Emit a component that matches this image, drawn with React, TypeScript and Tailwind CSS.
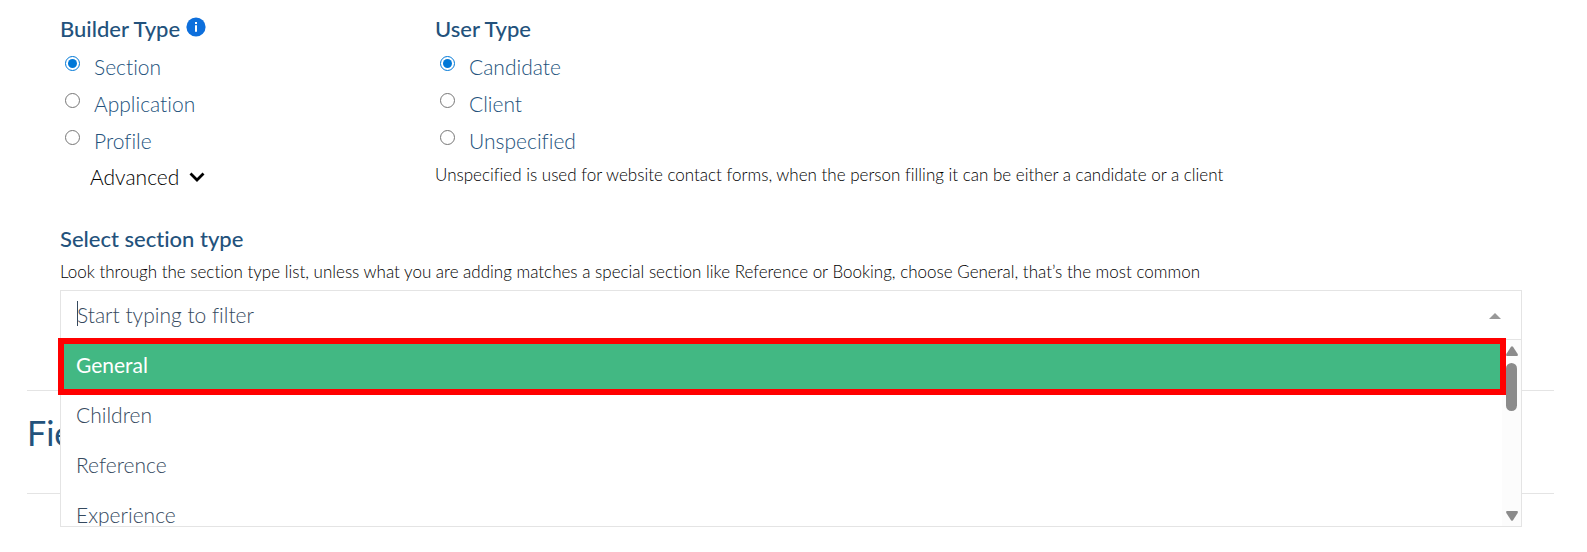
import { useState } from "react";

type RadioGroupProps = {
  name: string;
  options: string[];
  value: string;
  onChange: (value: string) => void;
};

const sectionTypes = ["General", "Children", "Reference", "Experience"];

function RadioGroup({ name, options, value, onChange }: RadioGroupProps) {
  return (
    <div className="mt-[5px]">
      {options.map((option) => (
        <label key={option} className="flex h-[37px] items-start text-[21px] leading-[38px] text-[#23527c]">
          <input
            type="radio"
            name={name}
            checked={value === option}
            onChange={() => onChange(option)}
            className="mt-2 mr-3.5 ml-[5px] size-[15px] shrink-0 accent-[#0078d7]"
          />
          {option}
        </label>
      ))}
    </div>
  );
}

function InfoIcon() {
  return (
    <svg viewBox="0 0 20 20" className="-mt-1 size-5" aria-hidden="true">
      <circle cx="10" cy="10" r="9.6" fill="#0d6fdc" />
      <path d="M9 5h2v1.900H9zM9 8.300h2v6.500H9z" fill="#fff" />
    </svg>
  );
}

function Scrollbar() {
  return (
    <div className="flex w-[19px] shrink-0 flex-col items-center bg-[#fcfcfc] pt-1.5 pb-[5px]" aria-hidden="true">
      <svg viewBox="0 0 12 10" className="h-2.5 w-3">
        <path d="M5 .8Q6-.4 7 .8L11.700 8Q12.300 9.800 11 10H1Q-.3 9.800.3 8Z" fill="#8b8b8b" />
      </svg>
      <div className="mt-[7px] h-12 w-[11px] rounded-full bg-[#8b8b8b]" />
      <svg viewBox="0 0 12 10" className="mt-auto h-2.5 w-3">
        <path d="M5 9.200Q6 10.400 7 9.200L11.700 2Q12.300.2 11 0H1Q-.3.2.3 2Z" fill="#8b8b8b" />
      </svg>
    </div>
  );
}

function SectionTypeSelect() {
  const [query, setQuery] = useState("");
  return (
    <div className="relative mt-1.5">
      <div className="relative flex h-[50px] items-center border border-[#e4e4e4] bg-white pr-5 pl-4">
        {query === "" && <span className="absolute top-2.5 left-4 h-[25px] w-px bg-[#35495e]" />}
        <input
          id="section-type"
          type="text"
          role="combobox"
          aria-expanded="true"
          aria-controls="section-type-list"
          placeholder="Start typing to filter"
          value={query}
          onChange={(event) => setQuery(event.target.value)}
          className="min-w-0 flex-1 text-[21px] text-[#35495e] outline-none placeholder:text-[#35495e] placeholder:opacity-100"
        />
        <svg viewBox="0 0 12 6" className="mt-0.5 h-1.5 w-3" aria-hidden="true">
          <path d="M6 0l6 6H0z" fill="#999" />
        </svg>
      </div>
      <div className="absolute inset-x-0 top-full z-10 flex h-[187px] border border-t-0 border-[#e4e4e4] bg-white">
        <ul id="section-type-list" role="listbox" className="min-w-0 flex-1 overflow-hidden">
          {sectionTypes.map((type, index) => (
            <li
              key={type}
              role="option"
              aria-selected={index === 0}
              className={
                index === 0
                  ? "h-[50px] bg-[#42b883] pl-[15px] text-[21px] leading-[50px] font-normal text-white"
                  : "h-[50px] pl-[15px] text-[21px] leading-[50px] text-[#35495e]"
              }
            >
              {type}
            </li>
          ))}
        </ul>
        <Scrollbar />
        <div className="pointer-events-none absolute -top-0.5 right-[15px] -left-[3px] h-[57px] border-6 border-[#ff0000]" />
      </div>
    </div>
  );
}

export default function App() {
  const [builder, setBuilder] = useState("Section");
  const [user, setUser] = useState("Candidate");
  return (
    <main className="min-h-screen bg-white pr-[33px] pl-[27px] font-['Lato',sans-serif] font-light text-black [font-variant-ligatures:none]">
      <div className="pt-[15px] pr-8 pl-[33px]">
        <div className="flex items-start">
          <fieldset className="w-[375px] shrink-0">
            <legend className="flex h-7 items-center gap-1.5 text-[22px] leading-7 font-medium text-[#23527c]">
              Builder Type <InfoIcon />
            </legend>
            <RadioGroup
              name="builder"
              options={["Section", "Application", "Profile"]}
              value={builder}
              onChange={setBuilder}
            />
            <button type="button" className="mt-1 ml-[30px] flex items-center gap-2.5 text-[21px] leading-7">
              Advanced
              <svg viewBox="0 0 16 10" className="h-2.5 w-4" aria-hidden="true">
                <path d="M1.500 1.500L8 8l6.500-6.500" fill="none" stroke="#000" strokeWidth="2.800" />
              </svg>
            </button>
          </fieldset>
          <fieldset className="min-w-0">
            <legend className="h-7 text-[22px] leading-7 font-medium text-[#23527c]">User Type</legend>
            <RadioGroup
              name="user"
              options={["Candidate", "Client", "Unspecified"]}
              value={user}
              onChange={setUser}
            />
            <p className="mt-1 text-[17px] leading-6">
              Unspecified is used for website contact forms, when the person filling it can be either a candidate or a
              client
            </p>
          </fieldset>
        </div>
        <div className="mt-[34px]">
          <label htmlFor="section-type" className="block text-[22px] leading-7 font-medium text-[#23527c]">
            Select section type
          </label>
          <p className="mt-[7px] text-[17px] leading-6">
            Look through the section type list, unless what you are adding matches a special section like Reference or
            Booking, choose General, that’s the most common
          </p>
          <SectionTypeSelect />
        </div>
      </div>
      <section className="mt-[50px] h-[104px] border-y border-[#e4e4e4] pt-[22px]">
        <h2 className="text-[34px] leading-10 font-normal text-[#23527c]">Fields</h2>
      </section>
    </main>
  );
}
